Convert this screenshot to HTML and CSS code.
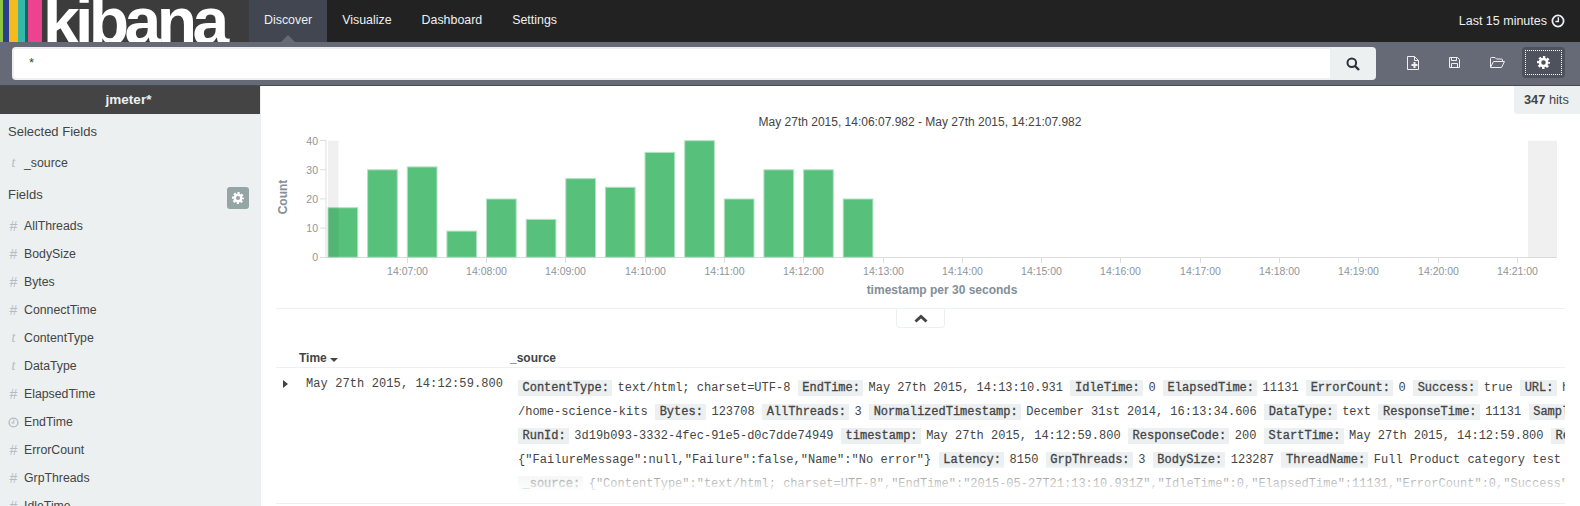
FILE: index.html
```html
<!DOCTYPE html>
<html>
  <head>
    <title>Discover - Kibana</title>
    <meta charset="utf-8" />
    <link rel="stylesheet" href="styles.css">
  </head>
  <body>
    <svg class="icon-defs" width="0" height="0">
      <symbol id="gear" viewBox="0 0 16 16">
        <circle cx="8" cy="8" r="4.4" fill="none" stroke="currentColor" stroke-width="3.2" />
        <circle cx="8" cy="8" r="6.6" fill="none" stroke="currentColor" stroke-width="2.8" stroke-dasharray="2.9 2.28" stroke-dashoffset="1.45" />
      </symbol>
      <symbol id="clock" viewBox="0 0 16 16">
        <circle cx="8" cy="8" r="6.4" fill="none" stroke="currentColor" stroke-width="2" />
        <path d="M8.4 3.8V8.6H5" fill="none" stroke="currentColor" stroke-width="1.6" />
      </symbol>
    </svg>

    <div class="navbar">
      <div class="logo">
        <span class="stripe lime"></span>
        <span class="stripe navy"></span>
        <span class="stripe yellow"></span>
        <span class="stripe teal"></span>
        <span class="stripe deep-teal"></span>
        <span class="stripe pink"></span>
        <span class="logo-text">kibana</span>
      </div>
      <a class="nav-link active">Discover</a>
      <a class="nav-link">Visualize</a>
      <a class="nav-link">Dashboard</a>
      <a class="nav-link">Settings</a>
      <div class="timepicker">
        Last 15 minutes
        <svg class="timepicker-clock"><use href="#clock" /></svg>
      </div>
    </div>

    <div class="subnav">
      <div class="search">
        <div class="search-input">*</div>
        <div class="search-btn">
          <svg width="14" height="14" viewBox="0 0 14 14">
            <circle cx="5.8" cy="5.8" r="4.3" fill="none" stroke="currentColor" stroke-width="2" />
            <path d="M9 9l4 4" stroke="currentColor" stroke-width="2.4" />
          </svg>
        </div>
      </div>
      <div class="tools">
        <div class="tool">
          <svg width="12" height="14" viewBox="0 0 12 14">
            <path d="M.5.5H7.5L11.5 4.5V13.5H.5Z" fill="none" stroke="currentColor" />
            <path d="M7.5.5V4.5H11.5" fill="none" stroke="currentColor" />
            <path d="M7.5 6V12M4.5 9H10.5" stroke="currentColor" stroke-width="2" />
          </svg>
        </div>
        <div class="tool">
          <svg width="11" height="11" viewBox="0 0 11 11">
            <path d="M.5.5H8.5L10.5 2.5V10.5H.5Z" fill="none" stroke="currentColor" />
            <path d="M2.5.5V3.5H7.5V.5M2.5 10.5V6.5H8.5V10.5" fill="none" stroke="currentColor" />
          </svg>
        </div>
        <div class="tool">
          <svg width="17" height="11" viewBox="0 0 17 11">
            <path d="M.5 10V1.5Q.5 .5 1.5 .5H5L6.5 2H11.5Q12.5 2 12.5 3V4.5" fill="none" stroke="currentColor" />
            <path d="M.5 10.5L3.5 4.5H14.5L11.5 10.5Z" fill="none" stroke="currentColor" />
          </svg>
        </div>
        <div class="tool active">
          <div class="focus-ring">
            <svg width="13" height="13"><use href="#gear" /></svg>
          </div>
        </div>
      </div>
    </div>

    <div class="content">
      <div class="sidebar">
        <div class="index-name">jmeter*</div>
        <div class="section-title">Selected Fields</div>
        <div class="field"><span class="field-type serif">t</span>_source</div>
        <div class="section-title">
          Fields
          <div class="field-settings">
            <svg width="12" height="12"><use href="#gear" /></svg>
          </div>
        </div>
        <div class="field"><span class="field-type">#</span>AllThreads</div>
        <div class="field"><span class="field-type">#</span>BodySize</div>
        <div class="field"><span class="field-type">#</span>Bytes</div>
        <div class="field"><span class="field-type">#</span>ConnectTime</div>
        <div class="field"><span class="field-type serif">t</span>ContentType</div>
        <div class="field"><span class="field-type serif">t</span>DataType</div>
        <div class="field"><span class="field-type">#</span>ElapsedTime</div>
        <div class="field"><span class="field-type"><svg width="11" height="11"><use href="#clock" /></svg></span>EndTime</div>
        <div class="field"><span class="field-type">#</span>ErrorCount</div>
        <div class="field"><span class="field-type">#</span>GrpThreads</div>
        <div class="field"><span class="field-type">#</span>IdleTime</div>
      </div>

      <div class="main">
        <div class="hits-row">
          <div class="hits"><b>347</b> hits</div>
        </div>

        <svg class="chart" viewBox="261 114 1319 194" width="1319" height="194">
          <text class="chart-title" x="920" y="125.5">May 27th 2015, 14:06:07.982 - May 27th 2015, 14:21:07.982</text>
          <text class="axis-title" transform="translate(287 197) rotate(-90)">Count</text>
          <text class="axis-title" x="942" y="293.5">timestamp per 30 seconds</text>

          <path class="axis" d="M320 140.5H326V257.5H1557M320 169.7H326M320 198.9H326M320 228.1H326M320 257.5H326" />
          <path class="axis" d="M407.5 258V263M486.5 258V263M565.5 258V263M645.5 258V263M724.5 258V263M803.5 258V263M883.5 258V263M962.5 258V263M1041.5 258V263M1120.5 258V263M1200.5 258V263M1279.5 258V263M1358.5 258V263M1438.5 258V263M1517.5 258V263" />

          <text class="tick-y" x="318" y="144.5">40</text>
          <text class="tick-y" x="318" y="173.5">30</text>
          <text class="tick-y" x="318" y="203">20</text>
          <text class="tick-y" x="318" y="232">10</text>
          <text class="tick-y" x="318" y="261">0</text>

          <text class="tick-x" x="407.5" y="275">14:07:00</text>
          <text class="tick-x" x="486.5" y="275">14:08:00</text>
          <text class="tick-x" x="565.5" y="275">14:09:00</text>
          <text class="tick-x" x="645.5" y="275">14:10:00</text>
          <text class="tick-x" x="724.5" y="275">14:11:00</text>
          <text class="tick-x" x="803.5" y="275">14:12:00</text>
          <text class="tick-x" x="883.5" y="275">14:13:00</text>
          <text class="tick-x" x="962.5" y="275">14:14:00</text>
          <text class="tick-x" x="1041.5" y="275">14:15:00</text>
          <text class="tick-x" x="1120.5" y="275">14:16:00</text>
          <text class="tick-x" x="1200.5" y="275">14:17:00</text>
          <text class="tick-x" x="1279.5" y="275">14:18:00</text>
          <text class="tick-x" x="1358.5" y="275">14:19:00</text>
          <text class="tick-x" x="1438.5" y="275">14:20:00</text>
          <text class="tick-x" x="1517.5" y="275">14:21:00</text>

          <rect class="bar" x="328" y="207.7" width="29.7" height="49.6" />
          <rect class="bar" x="367.6" y="169.8" width="29.7" height="87.5" />
          <rect class="bar" x="407.3" y="166.9" width="29.7" height="90.4" />
          <rect class="bar" x="446.9" y="231.1" width="29.7" height="26.2" />
          <rect class="bar" x="486.5" y="199" width="29.7" height="58.3" />
          <rect class="bar" x="526.2" y="219.4" width="29.7" height="37.9" />
          <rect class="bar" x="565.8" y="178.6" width="29.7" height="78.7" />
          <rect class="bar" x="605.4" y="187.3" width="29.7" height="70" />
          <rect class="bar" x="645" y="152.4" width="29.7" height="104.9" />
          <rect class="bar" x="684.7" y="140.7" width="29.7" height="116.6" />
          <rect class="bar" x="724.3" y="199" width="29.7" height="58.3" />
          <rect class="bar" x="763.9" y="169.8" width="29.7" height="87.5" />
          <rect class="bar" x="803.6" y="169.8" width="29.7" height="87.5" />
          <rect class="bar" x="843.2" y="199" width="29.7" height="58.3" />

          <rect class="out-of-range" x="328" y="140.7" width="10.5" height="116.6" />
          <rect class="out-of-range" x="1528" y="140.7" width="29" height="116.6" />
        </svg>

        <div class="spy-toggle">
          <div class="spy-btn">
            <svg width="14" height="9" viewBox="0 0 14 9">
              <path d="M1.5 7.5L7 2.5L12.5 7.5" fill="none" stroke="currentColor" stroke-width="3" />
            </svg>
          </div>
        </div>

        <div class="doc-table">
          <div class="doc-head">
            <div class="head-time">Time<span class="sort-caret"></span></div>
            <div>_source</div>
          </div>
          <div class="doc-row">
            <div class="row-toggle"><span class="row-caret"></span></div>
            <div class="row-time">May 27th 2015, 14:12:59.800</div>
            <div class="row-source">
              <div class="source-line"><span class="tag">ContentType:</span><span class="val">text/html; charset=UTF-8</span><span class="tag">EndTime:</span><span class="val">May 27th 2015, 14:13:10.931</span><span class="tag">IdleTime:</span><span class="val">0</span><span class="tag">ElapsedTime:</span><span class="val">11131</span><span class="tag">ErrorCount:</span><span class="val">0</span><span class="tag">Success:</span><span class="val">true</span><span class="tag">URL:</span><span class="val">http:</span></div>
              <div class="source-line"><span class="val">/home-science-kits</span><span class="tag">Bytes:</span><span class="val">123708</span><span class="tag">AllThreads:</span><span class="val">3</span><span class="tag">NormalizedTimestamp:</span><span class="val">December 31st 2014, 16:13:34.606</span><span class="tag">DataType:</span><span class="val">text</span><span class="tag">ResponseTime:</span><span class="val">11131</span><span class="tag">SampleLabel:</span></div>
              <div class="source-line"><span class="tag">RunId:</span><span class="val">3d19b093-3332-4fec-91e5-d0c7dde74949</span><span class="tag">timestamp:</span><span class="val">May 27th 2015, 14:12:59.800</span><span class="tag">ResponseCode:</span><span class="val">200</span><span class="tag">StartTime:</span><span class="val">May 27th 2015, 14:12:59.800</span><span class="tag">Result:</span></div>
              <div class="source-line"><span class="val json">{"FailureMessage":null,"Failure":false,"Name":"No error"}</span><span class="tag">Latency:</span><span class="val">8150</span><span class="tag">GrpThreads:</span><span class="val">3</span><span class="tag">BodySize:</span><span class="val">123287</span><span class="tag">ThreadName:</span><span class="val">Full Product category test</span></div>
              <div class="source-line"><span class="tag">_source:</span><span class="val">{"ContentType":"text/html; charset=UTF-8","EndTime":"2015-05-27T21:13:10.931Z","IdleTime":0,"ElapsedTime":11131,"ErrorCount":0,"Success":true}</span></div>
            </div>
          </div>
        </div>
      </div>
    </div>
  </body>
</html>
```
FILE: styles.css
```css
body {
  margin: 0;
  height: 506px;
  overflow: hidden;
  background: #ffffff;
  color: #444444;
  font-family: "Liberation Sans", Arial, sans-serif;
  font-size: 12.3px;
}
svg {
  display: block;
}
.icon-defs {
  position: absolute;
}

/* Top bar */
.navbar {
  display: flex;
  height: 42px;
  background: #222222;
  color: #ecf0f1;
}
.logo {
  display: flex;
  width: 249px;
  background: #3c3c3c;
  overflow: hidden;
}
.stripe {
  height: 42px;
}
.stripe.lime {
  width: 3px;
  background: #8cc63f;
}
.stripe.navy {
  width: 6px;
  background: #2b3f8c;
}
.stripe.yellow {
  width: 9px;
  background: #f5bb1b;
}
.stripe.teal {
  width: 7px;
  background: #35b8a8;
}
.stripe.deep-teal {
  width: 3px;
  background: #0b6b62;
}
.stripe.pink {
  width: 14px;
  background: #ec4390;
}
.logo-text {
  margin-left: 1px;
  color: #ffffff;
  font-size: 66px;
  font-weight: bold;
  letter-spacing: -4.6px;
  line-height: 42px;
  height: 42px;
}
.nav-link {
  position: relative;
  padding: 0 15px;
  font-size: 12.4px;
  line-height: 40px;
}
.nav-link.active {
  background: #414650;
}
.nav-link.active::after {
  content: "";
  position: absolute;
  left: 50%;
  bottom: 0;
  margin-left: -7px;
  border: 7px solid transparent;
  border-top: 0;
  border-bottom-color: #656a76;
}
.timepicker {
  display: flex;
  align-items: center;
  gap: 4px;
  margin-left: auto;
  padding-right: 15px;
  font-size: 12.5px;
}
.timepicker-clock {
  width: 14px;
  height: 14px;
}

/* Search bar */
.subnav {
  display: flex;
  align-items: flex-start;
  height: 43px;
  background: #656a76;
  border-bottom: 1px solid #464a52;
  color: #ecf0f1;
}
.search {
  display: flex;
  margin: 5px 0 0 12px;
  height: 33px;
}
.search-input {
  width: 1318px;
  box-sizing: border-box;
  padding-left: 15px;
  background: #ffffff;
  border: 2px solid #ecf0f1;
  border-right: 0;
  border-radius: 4px 0 0 4px;
  color: #444444;
  font-size: 13px;
  line-height: 28px;
}
.search-btn {
  display: flex;
  align-items: center;
  justify-content: center;
  width: 46px;
  background: #ecf0f1;
  border-radius: 0 4px 4px 0;
  color: #2c3338;
}
.tools {
  display: flex;
  margin: 5px 0 0 16px;
}
.tool {
  display: flex;
  align-items: center;
  height: 31px;
  padding: 0 15px;
}
.tool.active {
  box-sizing: border-box;
  width: 43px;
  padding: 3px;
  background: #4e525d;
  border-radius: 4px;
}
.focus-ring {
  display: flex;
  align-items: center;
  justify-content: center;
  flex: 1;
  height: 100%;
  box-sizing: border-box;
  border: 1px dotted #ffffff;
  color: #ffffff;
}

/* Layout */
.content {
  display: flex;
  height: 420px;
}

/* Field list */
.sidebar {
  width: 261px;
  flex: none;
  background: #ecf0f1;
  overflow: hidden;
}
.index-name {
  margin-right: 1px;
  padding-right: 3px;
  background: #444444;
  color: #ecf0f1;
  font-size: 13.5px;
  font-weight: bold;
  line-height: 28px;
  text-align: center;
}
.section-title {
  display: flex;
  justify-content: space-between;
  align-items: flex-start;
  padding: 0 12px 0 8px;
  height: 35px;
  font-size: 13px;
  line-height: 35px;
}
.field-settings {
  display: flex;
  align-items: center;
  justify-content: center;
  width: 22px;
  height: 22px;
  margin-top: 10px;
  background: #95a5a6;
  border-radius: 3px;
  color: #ffffff;
}
.field {
  display: flex;
  align-items: center;
  height: 28px;
  padding-left: 8px;
}
.field-type {
  display: flex;
  justify-content: center;
  width: 11px;
  margin-right: 5px;
  color: #b4bcc2;
  font-size: 14px;
}
.field-type.serif {
  font-family: "Liberation Serif", serif;
  font-style: italic;
}

/* Histogram */
.main {
  flex: 1;
  min-width: 0;
}
.hits-row {
  display: flex;
  justify-content: flex-end;
}
.hits {
  width: 66px;
  box-sizing: border-box;
  padding-left: 10px;
  background: #ecf0f1;
  border-radius: 0 0 0 4px;
  font-size: 12.8px;
  line-height: 28px;
}
.chart text {
  font-family: "Liberation Sans", Arial, sans-serif;
}
.chart-title {
  fill: #444444;
  font-size: 12px;
  text-anchor: middle;
}
.axis-title {
  fill: #848e96;
  font-size: 12px;
  font-weight: bold;
  text-anchor: middle;
}
.tick-y,
.tick-x {
  fill: #8e959c;
  font-size: 10.5px;
}
.tick-y {
  text-anchor: end;
}
.tick-x {
  text-anchor: middle;
}
.axis {
  fill: none;
  stroke: #dddddd;
}
.bar {
  fill: #57c17b;
  stroke: #b2e1c2;
  stroke-width: 1;
}
.out-of-range {
  fill: rgba(0, 0, 0, 0.06);
}
.spy-toggle {
  display: flex;
  justify-content: center;
  margin: 0 15px;
  border-top: 1px solid #ecf0f1;
}
.spy-btn {
  display: flex;
  align-items: center;
  justify-content: center;
  width: 49px;
  height: 19px;
  box-sizing: border-box;
  border: 1px solid #ecf0f1;
  border-top: 0;
  border-radius: 0 0 4px 4px;
}

/* Documents */
.doc-table {
  margin: 0 15px;
}
.doc-head {
  display: flex;
  box-sizing: border-box;
  height: 40px;
  padding: 21px 0 0 23px;
  border-bottom: 1px solid #ecf0f1;
  font-size: 12px;
  font-weight: bold;
  line-height: 18px;
}
.head-time {
  width: 211px;
}
.sort-caret {
  display: inline-block;
  margin-left: 3px;
  border: 4px solid transparent;
  border-bottom: 0;
  border-top-color: #444444;
}
.doc-row {
  display: flex;
  height: 135px;
  overflow: hidden;
  border-bottom: 1px solid #ecf0f1;
  font-family: "Liberation Mono", "Courier New", monospace;
  font-size: 12px;
  line-height: 24px;
}
.row-toggle {
  width: 22px;
  flex: none;
  padding: 12px 0 0 7px;
  box-sizing: border-box;
}
.row-caret {
  display: block;
  border: 4px solid transparent;
  border-right: 0;
  border-left: 5px solid #444444;
  width: 0;
}
.row-time {
  width: 204px;
  flex: none;
  padding: 4px 0 0 8px;
  letter-spacing: 0.1px;
  white-space: nowrap;
}
.row-source {
  flex: 1;
  min-width: 0;
  padding: 8px 0 0 8px;
  position: relative;
}
.row-source::after {
  content: "";
  position: absolute;
  left: 0;
  right: 0;
  top: 98px;
  height: 28px;
  background: linear-gradient(to bottom, rgba(255, 255, 255, 0.2), #ffffff);
}
.source-line {
  height: 24px;
  overflow: hidden;
  white-space: nowrap;
}
.tag {
  display: inline-block;
  height: 16px;
  padding: 0 3.1px 0 4.5px;
  background: #ecf0f1;
  -webkit-text-stroke: 0.3px #444444;
  line-height: 16px;
  vertical-align: middle;
}
.val {
  display: inline-block;
  margin: 0 7.5px 0 5.5px;
  line-height: 16px;
  vertical-align: middle;
}
.val.json {
  letter-spacing: 0.05px;
}
.source-line .val:first-child {
  margin-left: 0;
}
```
